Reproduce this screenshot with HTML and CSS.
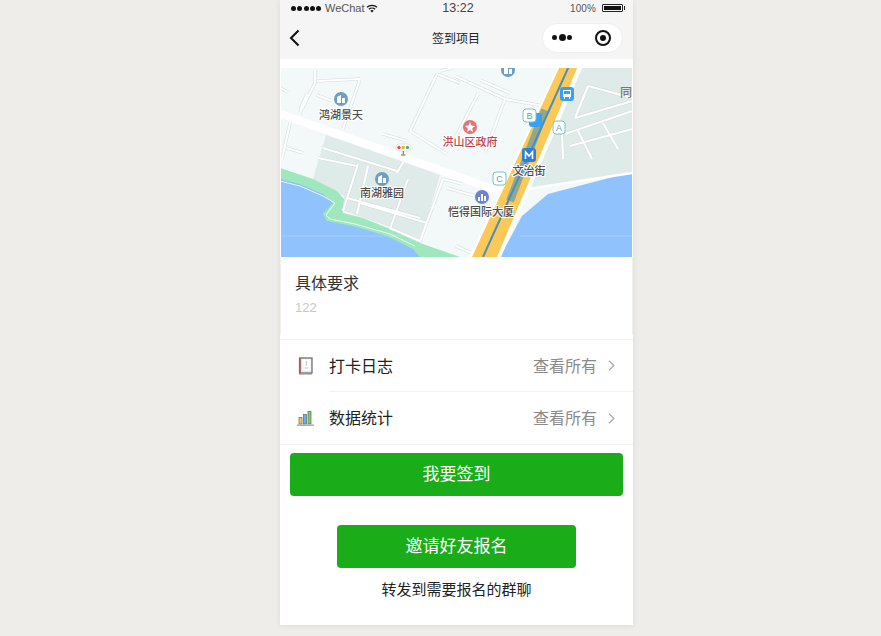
FILE: index.html
```html
<!DOCTYPE html>
<html lang="zh">
<head>
<meta charset="utf-8">
<title>签到项目</title>
<link rel="stylesheet" href="styles.css">
</head>
<body>
<main class="phone">
  <header class="top">
    <div class="status">
      <div class="status-left">
        <span class="signal"><i></i><i></i><i></i><i></i><i></i></span>
        <span class="carrier">WeChat</span>
        <svg class="wifi" width="12" height="9" viewBox="0 0 12 9"><path d="M6 8.600 4.300 6.700a2.500 2.500 0 0 1 3.400 0z" fill="#111"/><path d="M2.900 5.300a4.500 4.500 0 0 1 6.200 0M1 3.300a7.200 7.200 0 0 1 10 0" fill="none" stroke="#111" stroke-width="1.200"/></svg>
      </div>
      <div class="status-time">13:22</div>
      <div class="status-right">
        <span>100%</span>
        <span class="battery"><i></i></span>
      </div>
    </div>
    <nav class="nav">
      <svg class="back" width="11" height="18" viewBox="0 0 11 18"><path d="M9.500 1.500 2 9l7.500 7.500" fill="none" stroke="#111" stroke-width="2"/></svg>
      <h1 class="title">签到项目</h1>
      <div class="capsule">
        <span class="dots"><i></i><b></b><i></i></span>
        <svg width="18" height="18" viewBox="0 0 18 18"><circle cx="9" cy="9" r="7" fill="none" stroke="#111" stroke-width="2"/><circle cx="9" cy="9" r="3" fill="#111"/></svg>
      </div>
    </nav>
  </header>

  <section class="map">
    <svg width="351" height="189" viewBox="1 0 351 189">
      <defs>
        <path id="roads" d="M35 3 35 15 20 45M80 11 63 61M37 13 80 11M37 27 52 33M20 42 27 26M10 55 2 91M7 80 23 85M43 80 117 103M38 90 77 98M78 96 63 143M88 98 77 146M128 111 110 161M67 130 140 150M80 135 147 155M110 160 140 173 163 111M125 91 117 105M157 6 130 63 167 86M157 6 180 15M103 66 127 73M163 111 182 116M167 120 195 128M175 8 225 31 275 40M198 26 175 70M225 31 205 85M0 20 8 24M160 3 172 0M200 12 230 25M176 178 200 189M295 50 352 33M285 66 352 43M290 78 352 61M282 66 283 91M308 18 295 50M298 63 312 91M323 55 338 81M308 18 352 30"/>
      </defs>
      <rect class="m-land" width="352" height="189"/>
      <path class="m-block" d="M300 -2H352V105L248 121L225 125L272 50Z"/>
      <path class="m-block" d="M46 67 118 92 160 107 141 172 110 159 64 143 64 128 33 111Z"/>
      <path class="m-green" d="M0 100 33 111 57 123 64 131 63 145 83 150 110 161 140 175 180 189H0Z"/>
      <path class="m-water" d="M0 111 20 116 43 126 53 135 43 146 47 153 73 158 107 168 133 181 140 189H0Z"/>
      <path class="m-water" d="M220 189 242 148 268 126 352 104V189Z"/>
      <path class="m-thin-w" d="M0 113 20 118 43 128 55 135 46 147 50 151 75 156 110 166 135 178"/>
      <path class="m-grid" d="M0 168H140M240 168H352"/>
      <use class="m-casing" href="#roads"/>
      <use class="m-minor" href="#roads"/>
      <path class="m-road" d="M-2 45 182 110 222 124"/>
      <path class="m-road-mid" d="M248 121 352 105"/>
      <path class="m-hw-edge" d="M278 -2H303L221 189H189Z"/>
      <path class="m-hw" d="M280 -2H298L217 189H192Z"/>
      <path class="m-hw-over" d="M265 42 230 133"/>
      <path class="m-hw-line" d="M289 -2 203 189"/>
      <circle class="p-blue" cx="228" cy="2" r="7"/>
      <circle class="p-blue" cx="61" cy="31" r="7"/>
      <circle class="p-blue" cx="102" cy="111" r="7"/>
      <path class="p-mark" d="M57 35V29L61 27V35ZM62 30H65V35H62ZM98 115V109L102 107V115ZM103 110H106V115H103ZM224 6V0L228-2V6ZM229 1H232V6H229Z"/>
      <circle class="p-red" cx="190" cy="59" r="7"/>
      <path class="p-mark" d="M190 54 191.500 57.500 195 58 192.300 60.300 193 64 190 62 187 64 187.700 60.300 185 58 188.500 57.500Z"/>
      <circle class="p-indigo" cx="202" cy="129" r="7"/>
      <path class="p-mark" d="M198 133V129H200V133ZM201 133V126H203V133ZM204 133V128H206V133Z"/>
      <rect class="p-bus" x="280" y="19" width="14" height="14" rx="3"/>
      <path class="p-mark" d="M283 22H291V29H290V31H289V29H285V31H284V29H283ZM284 23V26H290V23Z"/>
      <rect class="p-bus" x="249" y="45" width="13" height="14" rx="3"/>
      <rect class="p-metro" x="242" y="80" width="14" height="14" rx="3"/>
      <path class="p-m" d="M245.500 91V84L249 88 252.500 84V91"/>
      <g class="tag">
        <rect x="243" y="41" width="13" height="13" rx="3"/><text x="249.500" y="51">B</text>
        <rect x="273" y="53" width="12" height="13" rx="3"/><text x="279" y="63">A</text>
        <rect x="213" y="104" width="13" height="13" rx="3"/><text x="219.500" y="114">C</text>
      </g>
      <g class="light">
        <rect x="116" y="76" width="15" height="7" rx="3.500"/>
        <circle class="l-r" cx="119" cy="79.500" r="1.700"/><circle class="l-y" cx="123.300" cy="79.500" r="1.700"/><circle class="l-g" cx="127.500" cy="79.500" r="1.700"/>
        <path class="l-p" d="M123.300 83V86.500M121 87H125.600"/>
      </g>
      <g class="lab">
        <text x="61" y="51">鸿湖景天</text>
        <text x="102" y="129">南湖雅园</text>
        <text x="201" y="148">恺得国际大厦</text>
        <text x="249" y="107">文治街</text>
      </g>
      <text class="lab-red" x="190" y="78">洪山区政府</text>
      <text class="lab-edge" x="340" y="29">同</text>
    </svg>
  </section>

  <section class="req">
    <h2 class="req-title">具体要求</h2>
    <p class="req-text">122</p>
  </section>

  <section class="list">
    <div class="row">
      <svg class="row-icon" width="17" height="18" viewBox="0 0 17 18"><rect x="2.500" y="1" width="12.500" height="15" fill="#e8ecef" stroke="#666" stroke-width="1.200"/><rect x="5" y="2.500" width="8.500" height="11" fill="#fff"/><path d="M3 1V16.500" stroke="#b5575a" stroke-width="1.800"/><path d="M2 17H15" stroke="#888" stroke-width="1"/><path d="M9.300 4V9M7.500 11H11.500" stroke="#b8c8d8" stroke-width="1.100"/></svg>
      <span class="row-body">
        <span class="row-name">打卡日志</span>
        <span class="row-more">查看所有</span>
        <svg class="chev" width="7" height="11" viewBox="0 0 7 11"><path d="M1 .8 5.800 5.500 1 10.200" fill="none" stroke="#aaa" stroke-width="1.300"/></svg>
      </span>
    </div>
    <div class="row">
      <svg class="row-icon" width="17" height="16" viewBox="0 0 17 16"><rect x="2" y="7.500" width="3" height="6.500" fill="#f2c95c" stroke="#666" stroke-width=".7"/><rect x="6.500" y="4.500" width="3" height="9.500" fill="#5cb6ee" stroke="#666" stroke-width=".7"/><rect x="11" y="1.500" width="3" height="12.500" fill="#7bd065" stroke="#666" stroke-width=".7"/><path d="M0 15.200H17" stroke="#999" stroke-width="1.200"/></svg>
      <span class="row-body">
        <span class="row-name">数据统计</span>
        <span class="row-more">查看所有</span>
        <svg class="chev" width="7" height="11" viewBox="0 0 7 11"><path d="M1 .8 5.800 5.500 1 10.200" fill="none" stroke="#aaa" stroke-width="1.300"/></svg>
      </span>
    </div>
  </section>

  <section class="actions">
    <button class="btn btn-wide" type="button">我要签到</button>
    <button class="btn btn-mid" type="button">邀请好友报名</button>
    <p class="hint">转发到需要报名的群聊</p>
  </section>
</main>
</body>
</html>
```
FILE: styles.css
```css
* { box-sizing: border-box; }
html, body { margin: 0; height: 100%; }
body {
  background: #eeede9;
  padding-left: 280px;
  overflow: hidden;
  font-family: "Liberation Sans", "Noto Sans CJK SC", sans-serif;
}
.phone {
  width: 353px;
  height: 625px;
  background: #fff;
  box-shadow: 0 1px 6px rgba(0, 0, 0, .08);
  display: flex;
  flex-direction: column;
}
.top { background: #f5f5f5; height: 59px; flex: none; }
.status {
  height: 16px;
  display: grid;
  grid-template-columns: 1fr auto 1fr;
  align-items: center;
  padding: 0 8px 0 11px;
  font-size: 11px;
  color: #555;
}
.status-left { display: flex; align-items: center; }
.signal { display: flex; gap: 1.250px; }
.signal i { width: 5px; height: 5px; border-radius: 50%; background: #111; }
.carrier { margin: 0 1px 0 4px; }
.status-time { font-size: 12.500px; color: #444; }
.status-right { display: flex; justify-content: flex-end; align-items: center; gap: 6px; font-size: 10px; letter-spacing: .100px; }
.battery {
  width: 21px; height: 8px; padding: 1px;
  border: 1px solid #222; border-radius: 1px;
  position: relative; display: block; margin-right: 2px;
}
.battery i { display: block; height: 100%; background: #111; }
.battery::after {
  content: ""; position: absolute; right: -3px; top: 1px;
  width: 1px; height: 4px; background: #222;
}
.nav {
  height: 43px;
  display: grid;
  grid-template-columns: 1fr auto 1fr;
  align-items: center;
  padding: 0 10px 0 9px;
}
.back { display: block; }
.title {
  margin: 0;
  font: 400 12px/16px "Noto Sans CJK SC", sans-serif;
  color: #222;
}
.capsule {
  justify-self: end;
  width: 81px; height: 30px;
  background: #fff;
  border: 1px solid #eee;
  border-radius: 15px;
  display: flex;
  align-items: center;
  padding: 0 10px;
  justify-content: space-between;
}
.dots { display: flex; align-items: center; gap: 1.500px; margin-left: -1px; }
.dots i { width: 5px; height: 5px; background: #111; border-radius: 50%; }
.dots b { width: 7px; height: 7px; background: #111; border-radius: 50%; }

.map { margin: 9px 0 0 1px; height: 189px; width: 351px; flex: none; }
.map svg { display: block; }
.m-land { fill: #f3f8f8; }
.m-block { fill: #dfebe9; }
.m-green { fill: #9fe7bd; }
.m-water { fill: #90c3fd; }
.m-thin-w { fill: none; stroke: #fff; stroke-width: 1; opacity: .8; }
.m-grid { fill: none; stroke: #fff; stroke-width: .6; opacity: .35; }
.m-road { fill: none; stroke: #fff; stroke-width: 8; }
.m-road-mid { fill: none; stroke: #fff; stroke-width: 2.500; }
.m-casing { fill: none; stroke: #cfdcdc; stroke-width: 3.200; }
.m-minor { fill: none; stroke: #fff; stroke-width: 2.200; }
.m-hw-edge { fill: #fff; }
.m-hw { fill: #fbc957; }
.m-hw-over { fill: none; stroke: #6f9c9f; stroke-width: 8; opacity: .75; }
.m-hw-line { fill: none; stroke: #4a8fc0; stroke-width: 2; }
.p-blue { fill: #6d9fc3; }
.p-red { fill: #ea7071; }
.p-indigo { fill: #6c82d2; }
.p-mark { fill: #fff; }
.p-bus { fill: #39a0f5; }
.p-metro { fill: #2c7fd8; }
.p-m { fill: none; stroke: #fff; stroke-width: 1.600; }
.tag rect { fill: #fff; stroke: #7cc4c2; stroke-width: 1; }
.tag text { fill: #5aa8a8; font: 9px "Liberation Sans", sans-serif; text-anchor: middle; }
.light rect { fill: #fff; stroke: #ccc; stroke-width: .5; }
.l-r { fill: #e5534b; }
.l-y { fill: #f0b030; }
.l-g { fill: #4fb36a; }
.l-p { fill: none; stroke: #666; stroke-width: 1; }
.lab text, .lab-red, .lab-edge {
  font: 500 11px "Noto Sans CJK SC", sans-serif;
  text-anchor: middle;
  paint-order: stroke;
  stroke: #fff;
  stroke-width: 2px;
}
.lab text { fill: #4d4d4d; }
.lab-red { fill: #c0434a; }
.lab-edge { fill: #777; font-size: 12px; stroke: none; text-anchor: start; }

.req {
  height: 78px;
  flex: none;
  padding: 15px 14px 0;
  border-left: 1px solid #eef2e8;
  border-right: 1px solid #eef2e8;
}
.req-title {
  margin: 0;
  font: 400 16px/20px "Noto Sans CJK SC", sans-serif;
  color: #333;
}
.req-text {
  margin: 7px 0 0;
  font-size: 13px;
  line-height: 18px;
  color: #c8c8c8;
}
.list {
  margin-top: 4px;
  flex: none;
  border-top: 1px solid #f2f2f2;
  border-bottom: 1px solid #f2f2f2;
}
.row { display: flex; align-items: center; height: 52px; padding-left: 17px; }
.row-icon { flex: none; width: 17px; margin-right: 15px; }
.row-body {
  flex: 1;
  height: 100%;
  display: flex;
  align-items: center;
  padding-right: 18px;
}
.row:first-child .row-body { border-bottom: 1px solid #f2f2f2; }
.row-name {
  flex: 1;
  margin-bottom: 2px;
  font: 400 16px/20px "Noto Sans CJK SC", sans-serif;
  color: #222;
}
.row-more {
  margin: 0 11px 2px 0;
  font: 400 16px/20px "Noto Sans CJK SC", sans-serif;
  color: #8a8a8a;
}
.actions {
  flex: 1;
  display: flex;
  flex-direction: column;
  align-items: center;
  padding-top: 8px;
}
.btn {
  display: block;
  height: 43px;
  border: 0;
  border-radius: 4px;
  background: #1aad19;
  color: #fff;
  font: 400 17px/40px "Noto Sans CJK SC", sans-serif;
  padding: 0 0 3px;
}
.btn-wide { width: 333px; }
.btn-mid { width: 239px; margin-top: 28.500px; }
.hint {
  margin: 11px 0 0;
  font: 400 15px/20px "Noto Sans CJK SC", sans-serif;
  color: #222;
}
```
